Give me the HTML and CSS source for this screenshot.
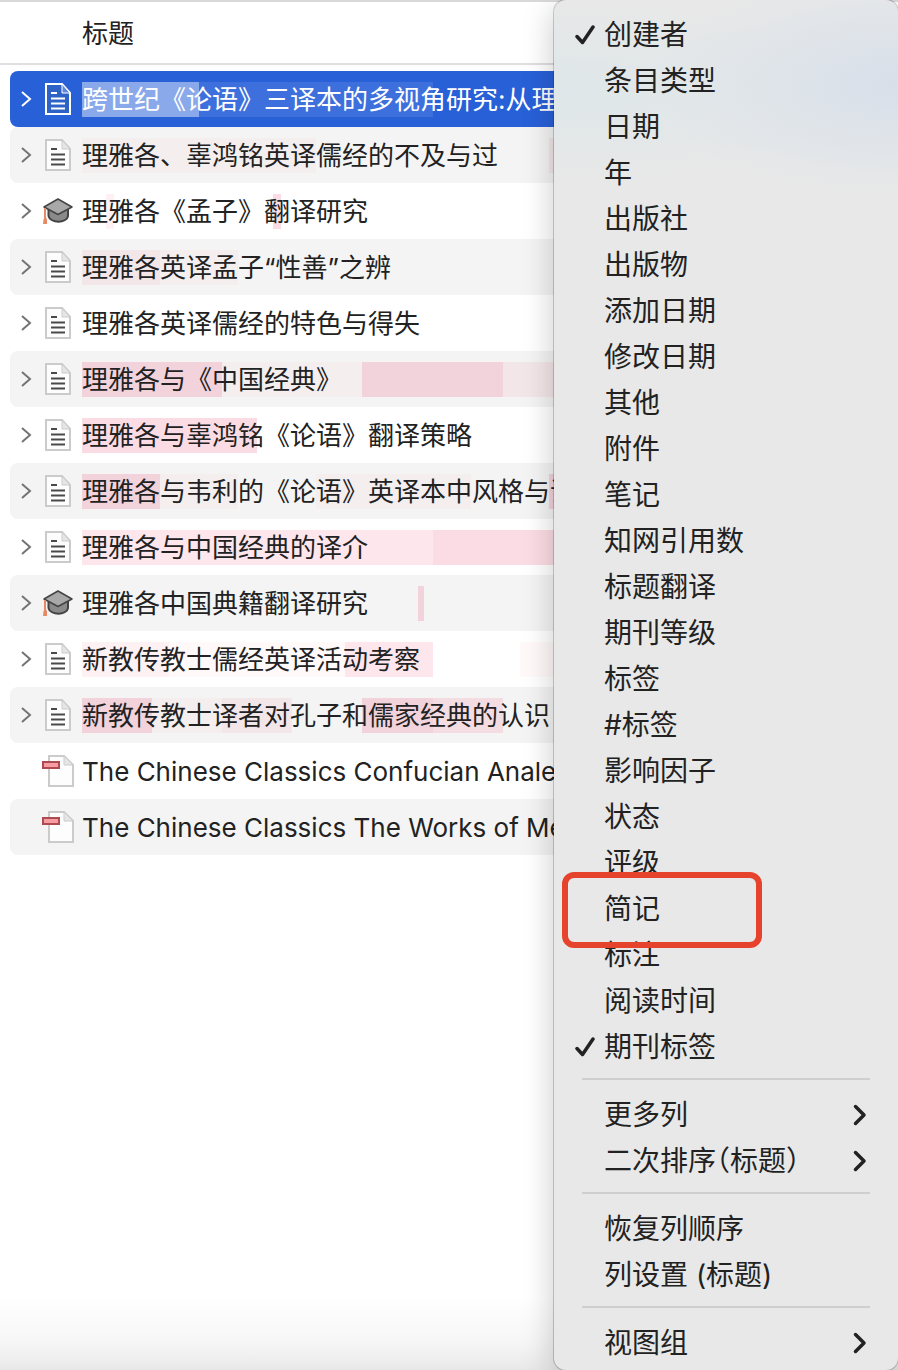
FILE: index.html
```
<!DOCTYPE html>
<html lang="zh-CN">
<head>
<meta charset="utf-8">
<meta name="viewport" content="width=device-width, initial-scale=1">
<title>标题</title>
<link rel="stylesheet" href="styles.css">
</head>
<body>
<svg class="sprite" aria-hidden="true">
  <symbol id="doc" viewBox="0 0 32 32">
    <path class="sheet" d="M4 1H20L28 10V31H4Z"/>
    <path class="fold" d="M20 1V10H28Z"/>
    <path class="lines" d="M9 10H15M9 15.500H23M9 20.500H23M9 25.500H23"/>
  </symbol>
  <symbol id="pdf" viewBox="0 0 32 32">
    <path class="sheet" d="M7 1H22L31 10V31H7Z"/>
    <path class="fold" d="M22 1V10H31Z"/>
    <path fill="#f79ca2" stroke="#ad4b51" stroke-width="2" d="M1 7H17V13H1Z"/>
  </symbol>
  <symbol id="cap" viewBox="0 0 32 32">
    <path d="M6.500 14V21C8 28.500 25 28.500 26 21V14Z" fill="#8a8a8a" stroke="#444" stroke-width="2"/>
    <path d="M2 12L16 4L30 12L16 19.500Z" fill="#a8a8a8" stroke="#444" stroke-width="1.500" stroke-linejoin="round"/>
    <path d="M3 13V24" stroke="#e58a64" stroke-width="2"/>
    <path d="M1.500 24.500L2.500 22H4L5 24.500V29H1Z" fill="#e58a64"/>
  </symbol>
  <symbol id="twisty" viewBox="0 0 12 18"><path d="M2 2L10 9L2 16" fill="none" stroke="currentColor" stroke-width="2"/></symbol>
  <symbol id="more" viewBox="0 0 14 22"><path d="M2.500 2.500L11 11L2.500 19.500" fill="none" stroke="currentColor" stroke-width="3.500" stroke-linecap="round" stroke-linejoin="round"/></symbol>
  <symbol id="check" viewBox="0 0 20 20"><path d="M2 11.500L7.500 17.500L18 2" fill="none" stroke="currentColor" stroke-width="3.500" stroke-linecap="round" stroke-linejoin="round"/></symbol>
</svg>

<main class="items">
  <header class="column-head">标题</header>
  <ul class="list">
    <li class="row selected">
      <button class="expand" aria-label="展开"><svg><use href="#twisty"/></svg></button>
      <svg class="icon"><use href="#doc"/></svg>
      <div class="title"><span class="heat"><i class="h4" style="width:117px"></i><i class="h1" style="width:234px"></i></span><span class="name">跨世纪《论语》三译本的多视角研究:从理雅各</span></div>
    </li>
    <li class="row">
      <button class="expand" aria-label="展开"><svg><use href="#twisty"/></svg></button>
      <svg class="icon"><use href="#doc"/></svg>
      <div class="title"><span class="heat"><i class="h1" style="width:234px"></i><i style="width:233px"></i><i class="h2" style="width:40px"></i></span><span class="name">理雅各、辜鸿铭英译儒经的不及与过</span></div>
    </li>
    <li class="row">
      <button class="expand" aria-label="展开"><svg><use href="#twisty"/></svg></button>
      <svg class="icon"><use href="#cap"/></svg>
      <div class="title"><span class="heat"><i style="width:24px"></i><i class="h2" style="width:8px"></i><i style="width:159px"></i><i class="h4" style="width:8px"></i></span><span class="name">理雅各《孟子》翻译研究</span></div>
    </li>
    <li class="row">
      <button class="expand" aria-label="展开"><svg><use href="#twisty"/></svg></button>
      <svg class="icon"><use href="#doc"/></svg>
      <div class="title"><span class="heat"><i class="h2" style="width:78px"></i><i class="h1" style="width:78px"></i></span><span class="name">理雅各英译孟子“性善”之辨</span></div>
    </li>
    <li class="row">
      <button class="expand" aria-label="展开"><svg><use href="#twisty"/></svg></button>
      <svg class="icon"><use href="#doc"/></svg>
      <div class="title"><span class="name">理雅各英译儒经的特色与得失</span></div>
    </li>
    <li class="row">
      <button class="expand" aria-label="展开"><svg><use href="#twisty"/></svg></button>
      <svg class="icon"><use href="#doc"/></svg>
      <div class="title"><span class="heat"><i class="h4" style="width:140px"></i><i class="h1" style="width:140px"></i><i class="h4" style="width:141px"></i><i class="h2" style="width:140px"></i></span><span class="name">理雅各与《中国经典》</span></div>
    </li>
    <li class="row">
      <button class="expand" aria-label="展开"><svg><use href="#twisty"/></svg></button>
      <svg class="icon"><use href="#doc"/></svg>
      <div class="title"><span class="heat"><i class="h4" style="width:175px"></i></span><span class="name">理雅各与辜鸿铭《论语》翻译策略</span></div>
    </li>
    <li class="row">
      <button class="expand" aria-label="展开"><svg><use href="#twisty"/></svg></button>
      <svg class="icon"><use href="#doc"/></svg>
      <div class="title"><span class="heat"><i class="h4" style="width:78px"></i><i class="h1" style="width:78px"></i><i style="width:78px"></i><i class="h1" style="width:155px"></i><i style="width:78px"></i><i class="h4" style="width:78px"></i></span><span class="name">理雅各与韦利的《论语》英译本中风格与译</span></div>
    </li>
    <li class="row">
      <button class="expand" aria-label="展开"><svg><use href="#twisty"/></svg></button>
      <svg class="icon"><use href="#doc"/></svg>
      <div class="title"><span class="heat"><i class="h3" style="width:351px"></i><i class="h4" style="width:351px"></i></span><span class="name">理雅各与中国经典的译介</span></div>
    </li>
    <li class="row">
      <button class="expand" aria-label="展开"><svg><use href="#twisty"/></svg></button>
      <svg class="icon"><use href="#cap"/></svg>
      <div class="title"><span class="heat"><i style="width:336px"></i><i class="h4" style="width:6px"></i></span><span class="name">理雅各中国典籍翻译研究</span></div>
    </li>
    <li class="row">
      <button class="expand" aria-label="展开"><svg><use href="#twisty"/></svg></button>
      <svg class="icon"><use href="#doc"/></svg>
      <div class="title"><span class="heat"><i class="h2" style="width:87px"></i><i class="h1" style="width:176px"></i><i class="h3" style="width:88px"></i><i style="width:87px"></i><i class="h1" style="width:88px"></i></span><span class="name">新教传教士儒经英译活动考察</span></div>
    </li>
    <li class="row">
      <button class="expand" aria-label="展开"><svg><use href="#twisty"/></svg></button>
      <svg class="icon"><use href="#doc"/></svg>
      <div class="title"><span class="heat"><i class="h4" style="width:70px"></i><i class="h1" style="width:70px"></i><i class="h2" style="width:70px"></i><i style="width:70px"></i><i class="h4" style="width:71px"></i><i class="h3" style="width:70px"></i></span><span class="name">新教传教士译者对孔子和儒家经典的认识</span></div>
    </li>
    <li class="row">
      <span class="expand"></span>
      <svg class="icon"><use href="#pdf"/></svg>
      <div class="title"><span class="name">The Chinese Classics Confucian Analects</span></div>
    </li>
    <li class="row">
      <span class="expand"></span>
      <svg class="icon"><use href="#pdf"/></svg>
      <div class="title"><span class="name">The Chinese Classics The Works of Mencius</span></div>
    </li>
  </ul>
</main>

<div class="menu" role="menu">
  <button class="entry" role="menuitemcheckbox" aria-checked="true"><svg class="check"><use href="#check"/></svg>创建者</button>
  <button class="entry" role="menuitemcheckbox">条目类型</button>
  <button class="entry" role="menuitemcheckbox">日期</button>
  <button class="entry" role="menuitemcheckbox">年</button>
  <button class="entry" role="menuitemcheckbox">出版社</button>
  <button class="entry" role="menuitemcheckbox">出版物</button>
  <button class="entry" role="menuitemcheckbox">添加日期</button>
  <button class="entry" role="menuitemcheckbox">修改日期</button>
  <button class="entry" role="menuitemcheckbox">其他</button>
  <button class="entry" role="menuitemcheckbox">附件</button>
  <button class="entry" role="menuitemcheckbox">笔记</button>
  <button class="entry" role="menuitemcheckbox">知网引用数</button>
  <button class="entry" role="menuitemcheckbox">标题翻译</button>
  <button class="entry" role="menuitemcheckbox">期刊等级</button>
  <button class="entry" role="menuitemcheckbox">标签</button>
  <button class="entry" role="menuitemcheckbox">#标签</button>
  <button class="entry" role="menuitemcheckbox">影响因子</button>
  <button class="entry" role="menuitemcheckbox">状态</button>
  <button class="entry" role="menuitemcheckbox">评级</button>
  <button class="entry marked" role="menuitemcheckbox">简记</button>
  <button class="entry" role="menuitemcheckbox">标注</button>
  <button class="entry" role="menuitemcheckbox">阅读时间</button>
  <button class="entry" role="menuitemcheckbox" aria-checked="true"><svg class="check"><use href="#check"/></svg>期刊标签</button>
  <hr>
  <button class="entry" role="menuitem">更多列<svg class="more"><use href="#more"/></svg></button>
  <button class="entry" role="menuitem">二次排序（标题）<svg class="more"><use href="#more"/></svg></button>
  <hr>
  <button class="entry" role="menuitem">恢复列顺序</button>
  <button class="entry" role="menuitem">列设置 (标题)</button>
  <hr>
  <button class="entry" role="menuitem">视图组<svg class="more"><use href="#more"/></svg></button>
</div>
</body>
</html>
```
FILE: styles.css
```
*, *::after { box-sizing: border-box; }

body {
  margin: 0;
  position: relative;
  min-height: 100vh;
  overflow-x: hidden;
  background: linear-gradient(to top, #e8e8e8, #f6f6f6 26px, #fff 72px) #fff;
  color: #222;
  font-family: Inter, "Noto Sans CJK SC", sans-serif;
  font-size: 26px;
}

button {
  border: 0;
  padding: 0;
  background: none;
  color: inherit;
  font: inherit;
}

.sprite { display: none; }

.items { overflow: hidden; }

.column-head {
  height: 65px;
  padding-left: 82px;
  border-top: 2px solid #d9d9d9;
  border-bottom: 2px solid #dfdfe1;
  line-height: 64px;
}

.list {
  margin: 0;
  padding: 6px 10px;
  list-style: none;
}

.row {
  display: flex;
  align-items: center;
  height: 56px;
  border-radius: 8px;
}
.row:nth-child(even) { background: #f4f4f4; }
.row.selected { background: #2860d8; color: #fff; }

.expand {
  flex: none;
  display: flex;
  justify-content: center;
  width: 32px;
  color: #747474;
}
.expand svg { width: 12px; height: 18px; }
.selected .expand { color: #fff; }

.icon { flex: none; width: 32px; height: 32px; margin-right: 8px; }
.sheet { fill: var(--paper, #fdfdfd); stroke: var(--ink, #cbcbcb); stroke-width: 2; }
.fold { fill: var(--flap, #e6e6e6); stroke: var(--ink, #cbcbcb); stroke-width: 1; }
.lines { fill: none; stroke: var(--ink, #4a4a4a); stroke-width: 2; }
.selected .icon { --ink: #fff; --paper: #2f62c6; --flap: #5d86e0; }

.title {
  flex: 1;
  min-width: 0;
  display: grid;
  overflow: hidden;
  line-height: 35px;
}
.heat, .name { grid-area: 1 / 1; white-space: nowrap; }
.name { position: relative; }
.heat { display: flex; height: 35px; }
.heat i { flex: none; }
.h1 { background: rgba(240, 60, 105, .03); }
.h2 { background: rgba(240, 60, 105, .07); }
.h3 { background: rgba(240, 60, 105, .13); }
.h4 { background: rgba(240, 60, 105, .18); }
.selected .h1 { background: rgba(255, 255, 255, .1); }
.selected .h4 { background: rgba(255, 255, 255, .46); }

.menu {
  position: absolute;
  top: 0;
  right: 0;
  width: 344px;
  padding: 12px 0 4px;
  border-radius: 12px;
  background:
    radial-gradient(260px 110px at 350px 85px, #d8dfea, rgba(220, 227, 234, .6) 60%, rgba(232, 232, 232, 0)),
    radial-gradient(300px 90px at 0 92px, #dee7e9, rgba(232, 232, 232, 0)),
    #e8e8e8;
  box-shadow: 0 0 0 1px rgba(0, 0, 0, .18), 0 8px 32px rgba(0, 0, 0, .22);
  font-size: 28px;
}

.entry {
  position: relative;
  display: flex;
  align-items: center;
  width: 100%;
  height: 46px;
  padding: 0 31px 0 50px;
  line-height: 36px;
  text-align: left;
  white-space: pre;
  font-feature-settings: "halt";
}
.check { flex: none; width: 20px; height: 20px; margin: 0 9px 0 -29px; }
.more { width: 14px; height: 22px; margin-left: auto; }

.marked::after {
  content: "";
  position: absolute;
  top: -14px;
  left: 8px;
  width: 200px;
  height: 76px;
  border: 6px solid #e5432b;
  border-radius: 12px;
  z-index: 1;
}

.menu hr {
  height: 2px;
  margin: 8px 28px 12px;
  border: 0;
  background: #cfcfcf;
}
```
